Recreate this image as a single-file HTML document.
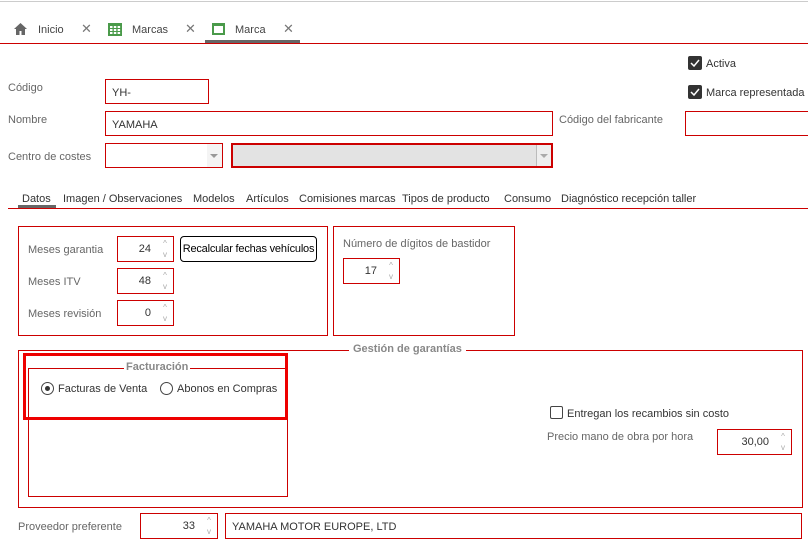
<!DOCTYPE html>
<html><head><meta charset="utf-8"><style>
*{box-sizing:border-box;margin:0;padding:0}
body{width:808px;height:547px;background:#fff;font-family:"Liberation Sans",sans-serif;font-size:11px;color:#555;position:relative;overflow:hidden}
.a{position:absolute}
.box{position:absolute;border:1px solid #c00;background:#fff}
.lbl{position:absolute;color:#666;font-size:11px;white-space:nowrap}
.txt{position:absolute;color:#333;font-size:11px;white-space:nowrap}
.spin{position:absolute;border:1px solid #c00;background:#fff;color:#333;text-align:right;padding-right:22px;font-size:11px}
.arr{position:absolute;right:4px;color:#aaa;font-size:8px;line-height:9px;text-align:center;width:8px}
.chk{position:absolute;width:14px;height:14px;background:#333;border-radius:2px}
.chk svg{position:absolute;left:2px;top:3px}
</style></head><body>
<div class="a" style="left:0;top:1px;width:808px;height:1px;background:#ccc"></div>
<svg class="a" style="left:14px;top:23px" width="13" height="12" viewBox="0 0 13 12"><path d="M6.5 0L0 6h2v6h3.5V8h2v4H11V6h2z" fill="#666"/></svg>
<div class="txt" style="left:38px;top:24px;color:#444">Inicio</div>
<div class="txt" style="left:81px;top:21px;color:#777;font-size:13px">✕</div>
<svg class="a" style="left:108px;top:23px" width="14" height="13" viewBox="0 0 14 13"><rect x="0" y="0" width="14" height="13" fill="#4a9a4a"/><g fill="#fff"><rect x="2" y="3" width="2.5" height="2"/><rect x="5.8" y="3" width="2.5" height="2"/><rect x="9.6" y="3" width="2.5" height="2"/><rect x="2" y="6" width="2.5" height="2"/><rect x="5.8" y="6" width="2.5" height="2"/><rect x="9.6" y="6" width="2.5" height="2"/><rect x="2" y="9" width="2.5" height="2"/><rect x="5.8" y="9" width="2.5" height="2"/><rect x="9.6" y="9" width="2.5" height="2"/></g></svg>
<div class="txt" style="left:132px;top:24px;color:#444">Marcas</div>
<div class="txt" style="left:185px;top:21px;color:#777;font-size:13px">✕</div>
<div class="a" style="left:212px;top:23px;width:13px;height:12px;border:2px solid #4a9a4a;border-top-width:3px"></div>
<div class="txt" style="left:235px;top:24px;color:#444">Marca</div>
<div class="txt" style="left:283px;top:21px;color:#777;font-size:13px">✕</div>
<div class="a" style="left:205px;top:40px;width:95px;height:3px;background:#666"></div>
<div class="a" style="left:0;top:43px;width:808px;height:1px;background:#c00"></div>
<div class="chk" style="left:688px;top:56px"><svg width="10" height="8"><path d="M1 4l3 3 5-6" stroke="#fff" stroke-width="1.5" fill="none"/></svg></div>
<div class="txt" style="left:706px;top:58px">Activa</div>
<div class="chk" style="left:688px;top:85px"><svg width="10" height="8"><path d="M1 4l3 3 5-6" stroke="#fff" stroke-width="1.5" fill="none"/></svg></div>
<div class="txt" style="left:706px;top:87px">Marca representada</div>
<div class="lbl" style="left:8px;top:82px">Código</div>
<div class="box" style="left:105px;top:79px;width:104px;height:25px"><span class="txt" style="left:6px;top:7px">YH-</span></div>
<div class="lbl" style="left:8px;top:114px">Nombre</div>
<div class="box" style="left:105px;top:111px;width:448px;height:25px"><span class="txt" style="left:6px;top:7px">YAMAHA</span></div>
<div class="lbl" style="left:559px;top:114px">Código del fabricante</div>
<div class="box" style="left:685px;top:111px;width:130px;height:25px"></div>
<div class="lbl" style="left:8px;top:151px">Centro de costes</div>
<div class="box" style="left:105px;top:143px;width:118px;height:25px"><div class="a" style="right:0;top:0;width:15px;height:23px;background:#f4f4f4"></div><div class="a" style="right:4px;top:10px;border:4px solid transparent;border-top:4px solid #999"></div></div>
<div class="box" style="left:231px;top:143px;width:322px;height:25px;background:#e3e3e3;border-width:2px"><div class="a" style="right:0;top:0;width:15px;height:21px;background:#eee;border-left:1px solid #bbb"></div><div class="a" style="right:3px;top:9px;border:4px solid transparent;border-top:4px solid #aaa"></div></div>
<div class="txt" style="left:22px;top:193px">Datos</div>
<div class="txt" style="left:63px;top:193px">Imagen / Observaciones</div>
<div class="txt" style="left:193px;top:193px">Modelos</div>
<div class="txt" style="left:246px;top:193px">Artículos</div>
<div class="txt" style="left:299px;top:193px">Comisiones marcas</div>
<div class="txt" style="left:402px;top:193px">Tipos de  producto</div>
<div class="txt" style="left:504px;top:193px">Consumo</div>
<div class="txt" style="left:561px;top:193px">Diagnóstico recepción taller</div>
<div class="a" style="left:18px;top:205px;width:38px;height:3px;background:#666"></div>
<div class="a" style="left:8px;top:208px;width:800px;height:1px;background:#c00"></div>
<div class="box" style="left:18px;top:226px;width:310px;height:110px"></div>
<div class="lbl" style="left:28px;top:244px">Meses garantia</div>
<div class="spin" style="left:117px;top:236px;width:57px;height:26px;line-height:25px">24<div class="arr" style="top:2px">^</div><div class="arr" style="top:13px">v</div></div>
<div class="lbl" style="left:28px;top:276px">Meses ITV</div>
<div class="spin" style="left:117px;top:268px;width:57px;height:26px;line-height:25px">48<div class="arr" style="top:2px">^</div><div class="arr" style="top:13px">v</div></div>
<div class="lbl" style="left:28px;top:308px">Meses revisión</div>
<div class="spin" style="left:117px;top:300px;width:57px;height:26px;line-height:25px">0<div class="arr" style="top:2px">^</div><div class="arr" style="top:13px">v</div></div>
<div class="a" style="left:180px;top:236px;width:137px;height:26px;border:1px solid #000;border-radius:4px;color:#000;font-size:11px;text-align:center;line-height:24px;white-space:nowrap;letter-spacing:-0.2px">Recalcular fechas vehículos</div>
<div class="box" style="left:333px;top:226px;width:182px;height:110px"></div>
<div class="lbl" style="left:343px;top:238px">Número de dígitos de bastidor</div>
<div class="spin" style="left:343px;top:258px;width:57px;height:26px;line-height:25px">17<div class="arr" style="top:2px">^</div><div class="arr" style="top:13px">v</div></div>
<div class="box" style="left:18px;top:350px;width:785px;height:158px"></div>
<div class="a" style="left:349px;top:343px;padding:0 4px;background:#fff;color:#888;font-weight:bold;font-size:11px">Gestión de garantías</div>
<div class="box" style="left:28px;top:368px;width:260px;height:129px"></div>
<div class="a" style="left:23px;top:353px;width:265px;height:67px;border:3px solid #e00"></div>
<div class="a" style="left:124px;top:361px;padding:0 2px;background:#fff;color:#888;font-weight:bold;font-size:11px">Facturación</div>
<div class="a" style="left:41px;top:382px;width:13px;height:13px;border:1px solid #444;border-radius:50%"><div class="a" style="left:3px;top:3px;width:5px;height:5px;background:#333;border-radius:50%"></div></div>
<div class="txt" style="left:58px;top:383px">Facturas de Venta</div>
<div class="a" style="left:160px;top:382px;width:13px;height:13px;border:1px solid #444;border-radius:50%"></div>
<div class="txt" style="left:177px;top:383px">Abonos en Compras</div>
<div class="a" style="left:550px;top:406px;width:13px;height:13px;border:1px solid #444;border-radius:2px"></div>
<div class="txt" style="left:567px;top:408px">Entregan los recambios sin costo</div>
<div class="lbl" style="left:547px;top:431px">Precio mano de obra por hora</div>
<div class="spin" style="left:717px;top:429px;width:75px;height:26px;line-height:25px">30,00<div class="arr" style="top:2px">^</div><div class="arr" style="top:13px">v</div></div>
<div class="lbl" style="left:18px;top:521px">Proveedor preferente</div>
<div class="spin" style="left:140px;top:513px;width:78px;height:26px;line-height:25px">33<div class="arr" style="top:2px">^</div><div class="arr" style="top:13px">v</div></div>
<div class="box" style="left:225px;top:513px;width:577px;height:26px"><span class="txt" style="left:6px;top:7px">YAMAHA MOTOR EUROPE, LTD</span></div>
</body></html>
